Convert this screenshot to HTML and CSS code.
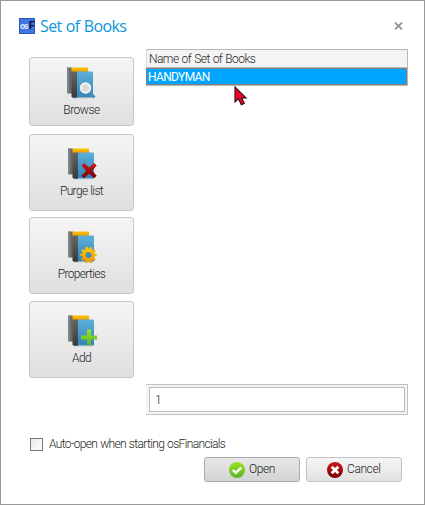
FILE: index.html
```html
<!DOCTYPE html>
<html lang="en">
<head>
<meta charset="utf-8">
<title>Set of Books</title>
<link rel="stylesheet" href="styles.css">
</head>
<body>
<svg class="defs" width="0" height="0" aria-hidden="true">
  <defs>
    <linearGradient id="blue" x2="0" y2="1"><stop stop-color="#5eb0dc"/><stop offset="1" stop-color="#3185b3"/></linearGradient>
    <linearGradient id="gray" x2="0" y2="1"><stop stop-color="#666"/><stop offset="1" stop-color="#383838"/></linearGradient>
    <linearGradient id="gold" x2="0" y2="1"><stop stop-color="#ffc400"/><stop offset="1" stop-color="#f49b00"/></linearGradient>
    <linearGradient id="red" x2="0" y2="1"><stop stop-color="#c9191e"/><stop offset="1" stop-color="#780006"/></linearGradient>
    <linearGradient id="green" x2="0" y2="1"><stop stop-color="#9be21b"/><stop offset="1" stop-color="#5bb531"/></linearGradient>
    <g id="books">
      <path d="M1 .5h5V26.500H2L1 25.500z" fill="#686b6b"/>
      <path d="M1 .5h2v26H2L1 25.500z" fill="#818484"/>
      <path d="M5.500 .5H22V5H5.500z" fill="url(#gold)"/>
      <path d="M5.500 4.500H11V31H7L5.500 29.500z" fill="url(#gray)"/>
      <path d="M11 4.500H26q1 0 1 1V29.500q0 1-1 1H11z" fill="url(#blue)"/>
      <path d="M7 31h19" stroke="#aebdc5" stroke-width=".6"/>
    </g>
  </defs>
</svg>
<main class="window">
  <header class="titlebar">
    <div class="logo"><span class="logo-os">os</span><span class="logo-f">F</span></div>
    <h1>Set of Books</h1>
    <svg class="close" width="9" height="8" viewBox="0 0 9 8"><path d="M1 .7l7 6.600M8 .7L1 7.300" stroke="#8d8d8d" stroke-width="1.700"/></svg>
  </header>
  <div class="content">
    <nav class="actions">
      <button class="action browse">
        <svg width="32" height="32" viewBox="0 0 32 32"><use href="#books"/><path d="M23.500 25.500l5 5" stroke="#458fb9" stroke-width="3"/><circle cx="19.500" cy="21" r="5" fill="#e5e5e5" stroke="#f6f6f6" stroke-width="1.500"/><circle cx="19.500" cy="21" r="3.200" fill="#dadada"/></svg>
        <span>Browse</span>
      </button>
      <button class="action purge">
        <svg width="32" height="32" viewBox="0 0 32 32"><use href="#books"/><path d="M14.500 17.600l2.600-2.600 5 4.600 5-4.600 2.600 2.600-4.500 5.100 4.500 5-2.600 2.600-5-4.600-5 4.600-2.600-2.600 4.500-5z" fill="url(#red)"/></svg>
        <span>Purge list</span>
      </button>
      <button class="action properties">
        <svg width="32" height="32" viewBox="0 0 32 32"><use href="#books"/><g fill="none" stroke="url(#gold)"><circle cx="21.500" cy="24" r="4.700" stroke-width="3.400"/><circle cx="21.500" cy="24" r="7.100" stroke-width="2.200" stroke-dasharray="2.450 2.011" stroke-dashoffset="1.200"/></g></svg>
        <span>Properties</span>
      </button>
      <button class="action add">
        <svg width="32" height="32" viewBox="0 0 32 32"><use href="#books"/><path d="M20 14.500h4v6h6v4h-6v6h-4v-6h-6v-4h6z" fill="url(#green)"/></svg>
        <span>Add</span>
      </button>
    </nav>
    <section class="books">
      <div class="grid">
        <div class="grid-head"><span>Name of Set of Books</span></div>
        <div class="grid-row"><span>HANDYMAN</span></div>
      </div>
      <div class="field"><input type="text" value="1" aria-label="Set number"></div>
    </section>
  </div>
  <label class="auto"><input type="checkbox"><span>Auto-open when starting osFinancials</span></label>
  <footer class="buttons">
    <button class="open">
      <svg width="16" height="16" viewBox="0 0 16 16"><circle cx="8" cy="8" r="8" fill="url(#green)"/><path d="M3.800 8l3 2.900 5.400-5.300" fill="none" stroke="#fff" stroke-width="2.300"/></svg>
      <span>Open</span>
    </button>
    <button class="cancel">
      <svg width="16" height="16" viewBox="0 0 16 16"><circle cx="8" cy="8" r="8" fill="url(#red)"/><path d="M4.700 4.700l6.600 6.600M11.300 4.700l-6.600 6.600" stroke="#fff" stroke-width="2.800"/></svg>
      <span>Cancel</span>
    </button>
  </footer>
  <svg class="pointer" width="14" height="20" viewBox="0 0 14 20"><path d="M1 1v15l3.500-3.200 2.800 6 3-1.400-2.700-5.600H12z" fill="#f00028" stroke="#3b1118" stroke-width="1.200"/></svg>
</main>
</body>
</html>
```
FILE: styles.css
```css
* { box-sizing: border-box; }
body {
  margin: 0;
  background: #fff;
  color: #1c1f24;
  font: 300 12px/16px Roboto, "Liberation Sans", sans-serif;
  letter-spacing: -.65px;
  word-spacing: .6px;
}
.defs { position: absolute; }
svg { display: block; flex: none; }
button, input { font: inherit; color: inherit; letter-spacing: inherit; word-spacing: inherit; margin: 0; }
span { white-space: nowrap; }
.window {
  position: relative;
  width: 425px;
  height: 505px;
  border: 1px solid #999;
  overflow: hidden;
}
.titlebar {
  display: flex;
  align-items: center;
  height: 48px;
  padding: 2px 21px 0 18px;
}
.logo {
  display: flex;
  align-items: center;
  justify-content: center;
  width: 16px;
  height: 16px;
  background: #3e76e4;
  border: 1px solid #2b58b8;
  font-weight: 700;
  line-height: 14px;
}
.logo-os { color: #dce9ff; font-size: 9px; letter-spacing: -1px; }
.logo-f { margin-left: 1px; color: #0a1540; font-size: 11px; }
h1 {
  margin: 0 auto 0 5px;
  color: #0a96dc;
  font: 400 16px/22px "Open Sans", sans-serif;
  letter-spacing: -.6px;
}
.content { display: flex; }
.actions {
  display: flex;
  flex-direction: column;
  width: 105px;
  margin: 8px 12px 0 28px;
}
.action {
  display: flex;
  flex-direction: column;
  align-items: center;
  height: 77px;
  padding: 13px 0 0;
  border: 1px solid #c8c8c8;
  border-radius: 3px;
  background: linear-gradient(#f5f5f5, #dfdfdf);
}
.action svg { margin-left: 2px; }
.action span { margin-top: 3px; }
.browse { height: 69px; padding-top: 9px; margin-bottom: 8px; letter-spacing: -.5px; }
.action.browse svg { margin-left: 0; }
.purge { margin-bottom: 6px; }
.properties { margin-bottom: 7px; }
.books {
  display: flex;
  flex-direction: column;
  justify-content: space-between;
  width: 262px;
  height: 366px;
}
.grid-head {
  height: 19px;
  padding: 1px 2px 0;
  border: 1px solid #b8b8b8;
  border-left-color: #ddd;
  background: #f4f4f4;
  letter-spacing: -.55px;
}
.grid-row {
  height: 18px;
  border-right: 1px solid #b8b8b8;
  border-bottom: 1px solid #b8b8b8;
  background: #00a5ff;
  color: #fff;
}
.grid-row span {
  display: block;
  height: 17px;
  padding-left: 1px;
  border: 1px dotted #ff5a00;
  font-weight: 400;
}
.field {
  height: 31px;
  padding: 2px 2px 2px 3px;
  border: 1px solid #c2c2c2;
  border-left: 0;
  background: #f5f5f5;
}
.field input {
  display: block;
  width: 256px;
  height: 25px;
  padding: 0 5px;
  border: 1px solid #bdbdbd;
  background: #fff;
  outline: 0;
}
.auto {
  display: flex;
  align-items: center;
  height: 16px;
  margin: 21px 0 0 29px;
}
.auto input {
  appearance: none;
  width: 13px;
  height: 13px;
  margin-right: 6px;
  border: 1px solid #777;
  background: linear-gradient(135deg, #e9e9e9, #fff);
}
.buttons { display: flex; gap: 6px; margin: 5px 0 0 203px; letter-spacing: -.4px; }
.buttons button {
  display: flex;
  align-items: center;
  gap: 4px;
  width: 96px;
  height: 25px;
  padding: 0 0 0 24px;
  border: 1px solid #c4c4c4;
  border-radius: 3px;
  background: linear-gradient(#f6f6f6, #e1e1e1);
}
.buttons span { margin-top: -1px; }
.buttons .cancel { padding-left: 20px; }
.buttons .open { background: linear-gradient(#e8e8e8, #d4d4d4); border-color: #aaa; }
.pointer { position: absolute; left: 233px; top: 85px; }
```
